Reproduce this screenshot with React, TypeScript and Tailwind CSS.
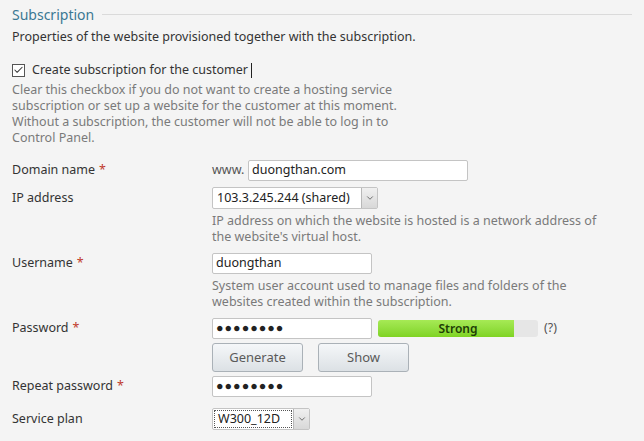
import { Check, ChevronDown } from "lucide-react"

const font = "font-['Noto_Sans',sans-serif]"

function Label({ text, required }: { text: string; required?: boolean }) {
  return (
    <div className="w-[200px] shrink-0 text-[12.5px] text-[#333]">
      {text}
      {required && <span className="ml-[4px] text-[#c0392b]">*</span>}
    </div>
  )
}

function TextInput({ value, width, dots }: { value: string; width: string; dots?: boolean }) {
  return (
    <div
      className={`${width} h-[21px] flex items-center rounded-[2px] border border-[#c4c4c4] bg-white px-[3px] text-[12.5px] text-[#222] ${
        dots ? "tracking-[1px] text-[10px]" : ""
      }`}
    >
      {value}
    </div>
  )
}

function Select({ value, width, focused }: { value: string; width: string; focused?: boolean }) {
  return (
    <div className={`${width} h-[22px] flex rounded-[2px] border border-[#c4c4c4] bg-white`}>
      <div className="flex-1 p-[1px]">
        <div
          className={`h-full flex items-center px-[3px] text-[12.5px] text-[#222] ${
            focused ? "border border-dotted border-[#555]" : ""
          }`}
        >
          {value}
        </div>
      </div>
      <div className="w-[16px] flex items-center justify-center border-l border-[#b8b8b8] bg-gradient-to-b from-[#f0f0f0] to-[#d8d8d8]">
        <ChevronDown className="w-[10px] h-[10px] text-[#555]" strokeWidth={2} />
      </div>
    </div>
  )
}

function Help({ children }: { children: React.ReactNode }) {
  return <div className="ml-[200px] text-[12.5px] leading-[16px] text-[#7a7a7a]">{children}</div>
}

function Button({ text }: { text: string }) {
  return (
    <div className="w-[91px] h-[29px] flex items-center justify-center rounded-[3px] border border-[#aab1b7] bg-gradient-to-b from-[#f5f7f9] to-[#dce1e5] text-[13px] text-[#5a5a5a]">
      {text}
    </div>
  )
}

export default function App() {
  return (
    <div className={`min-h-screen bg-[#f4f4f4] px-[12px] pt-[5px] ${font}`}>
      {/* heading */}
      <div className="h-[18px] flex items-center">
        <span className="text-[14px] text-[#3b7893]">Subscription</span>
        <div className="ml-[8px] flex-1 border-t border-[#dadada]" />
      </div>

      <div className="mt-[6px] text-[12.5px] leading-[16px] text-[#333]">
        Properties of the website provisioned together with the subscription.
      </div>

      <div className="mt-[17px] h-[16px] flex items-center">
        <div className="w-[13px] h-[13px] flex items-center justify-center border border-[#555] bg-white">
          <Check className="w-[12px] h-[12px] text-[#333]" strokeWidth={2.2} />
        </div>
        <span className="ml-[7px] text-[12.5px] text-[#333]">Create subscription for the customer</span>
        <span className="ml-[3px] w-px h-[15px] bg-[#222]" />
      </div>
      <div className="mt-[4px] text-[12.5px] leading-[16px] text-[#7a7a7a]">
        Clear this checkbox if you do not want to create a hosting service
        <br />
        subscription or set up a website for the customer at this moment.
        <br />
        Without a subscription, the customer will not be able to log in to
        <br />
        Control Panel.
      </div>

      {/* domain */}
      <div className="mt-[14px] flex items-center">
        <Label text="Domain name" required />
        <span className="text-[12.5px] text-[#555] w-[36px]">www.</span>
        <TextInput value="duongthan.com" width="w-[220px]" />
      </div>

      <div className="mt-[6px] flex items-center">
        <Label text="IP address" />
        <Select value="103.3.245.244 (shared)" width="w-[166px]" />
      </div>
      <div className="mt-[4px]">
        <Help>
          IP address on which the website is hosted is a network address of
          <br />
          the website's virtual host.
        </Help>
      </div>

      <div className="mt-[8px] flex items-center">
        <Label text="Username" required />
        <TextInput value="duongthan" width="w-[160px]" />
      </div>
      <div className="mt-[4px]">
        <Help>
          System user account used to manage files and folders of the
          <br />
          websites created within the subscription.
        </Help>
      </div>

      <div className="mt-[8px] flex items-center">
        <Label text="Password" required />
        <TextInput value="●●●●●●●●" width="w-[160px]" dots />
        <div className="ml-[6px] relative w-[160px] h-[17px] rounded-[3px] bg-[#e6e6e6] overflow-hidden">
          <div className="absolute left-0 top-0 h-full w-[85%] bg-gradient-to-b from-[#a6ea55] to-[#7fd321]" />
          <div className="relative h-full flex items-center justify-center text-[12px] font-semibold text-[#1d3d05]">
            Strong
          </div>
        </div>
        <span className="ml-[6px] text-[12.5px] text-[#555]">(?)</span>
      </div>

      <div className="mt-[4px] ml-[200px] flex gap-[15px]">
        <Button text="Generate" />
        <Button text="Show" />
      </div>

      <div className="mt-[4px] flex items-center">
        <Label text="Repeat password" required />
        <TextInput value="●●●●●●●●" width="w-[160px]" dots />
      </div>

      <div className="mt-[11px] flex items-center">
        <Label text="Service plan" />
        <Select value="W300_12D" width="w-[98px]" focused />
      </div>
    </div>
  )
}
